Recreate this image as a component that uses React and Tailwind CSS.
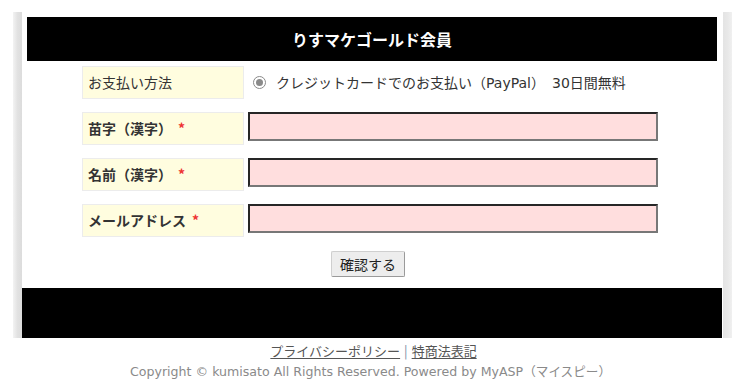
import React from "react";

const jp = { fontFamily: '"Noto Sans CJK JP", sans-serif' };
const latin = { fontFamily: '"DejaVu Sans", "Noto Sans CJK JP", sans-serif' };

function Label({ children, bold, required }) {
  return (
    <div
      className={`w-[162px] h-[33px] shrink-0 border border-[#ececec] bg-[#fffddf] flex items-center pl-[5px] text-[14px] text-[#333] ${bold ? "font-bold" : ""}`}
    >
      <span>{children}</span>
      {required && <span className="text-[#ee3333] ml-[6px]">*</span>}
    </div>
  );
}

function InputRow({ label }) {
  return (
    <div className="flex items-start gap-[4px]">
      <Label bold required>
        {label}
      </Label>
      <div className="w-[410px] h-[29px] bg-[#ffdede] border-2 border-t-[#262626] border-l-[#262626] border-b-[#777] border-r-[#777]" />
    </div>
  );
}

export default function App() {
  return (
    <div className="bg-white w-[747px] h-[390px] overflow-hidden" style={jp}>
      <div className="pt-[12px] pl-[13px]">
        <div className="flex w-[719px]">
          <div className="w-[9px] shrink-0 bg-gradient-to-r from-[#f3f3f3] via-[#e2e2e2] to-[#dcdcdc]" />
          <div className="w-[701px] shrink-0 bg-white pt-[5px]">
            <div className="ml-[5px] w-[690px] h-[44px] bg-black flex items-center justify-center text-white font-bold text-[16px]">
              りすマケゴールド会員
            </div>
            <div className="ml-[60px] mt-[5px] flex flex-col gap-[13px]">
              <div className="flex items-center gap-[4px]">
                <Label>お支払い方法</Label>
                <div className="flex items-center ml-[5px] text-[14px] text-[#333]">
                  <span className="w-[13px] h-[13px] rounded-full border border-[#8a8a8a] bg-white flex items-center justify-center">
                    <span className="w-[7px] h-[7px] rounded-full bg-[#8a8a8a]" />
                  </span>
                  <span className="ml-[10px]">
                    クレジットカードでのお支払い（<span style={latin}>PayPal</span>）　<span style={latin}>30</span>日間無料
                  </span>
                </div>
              </div>
              <InputRow label="苗字（漢字）" />
              <InputRow label="名前（漢字）" />
              <InputRow label="メールアドレス" />
            </div>
            <div className="mt-[14px] pl-[309px]">
              <button className="w-[74px] h-[26px] bg-[#ededed] border border-[#cfcfcf] border-b-[#9a9a9a] border-r-[#9a9a9a] rounded-[2px] text-[14px] text-[#222] flex items-center justify-center">
                確認する
              </button>
            </div>
            <div className="mt-[11px] w-[700px] h-[50px] bg-black" />
          </div>
          <div className="w-[9px] shrink-0 bg-gradient-to-r from-[#e4e4e4] via-[#e8e8e8] to-[#f0f0f0]" />
        </div>
      </div>
      <div className="text-center text-[13px] leading-[20px] mt-[3px] text-[#555]">
        <a className="underline underline-offset-2 decoration-[#555]">プライバシーポリシー</a>
        <span className="text-[#7a8aa0] mx-[4px]">|</span>
        <a className="underline underline-offset-2 decoration-[#555]">特商法表記</a>
      </div>
      <div className="text-center text-[12.6px] leading-[20px] text-[#8a8a8a] pr-[6px]" style={latin}>
        Copyright © kumisato All Rights Reserved. Powered by MyASP<span style={jp}>（マイスピー）</span>
      </div>
    </div>
  );
}
